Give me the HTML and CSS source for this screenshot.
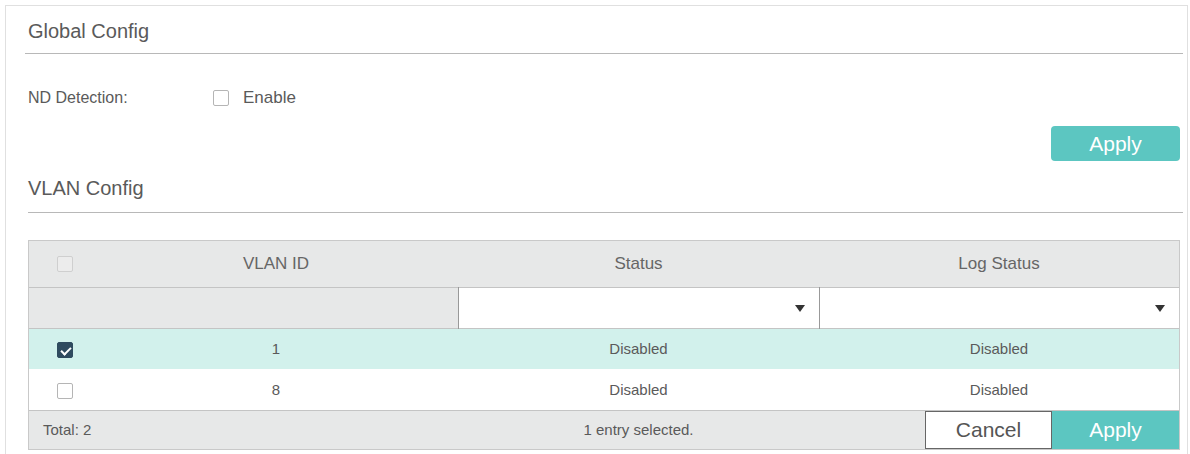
FILE: index.html
```html
<!DOCTYPE html>
<html lang="en">
<head>
  <meta charset="UTF-8">
  <title>ND Detection</title>
  <link rel="stylesheet" href="styles.css">
</head>
<body>
  <div class="panel">
    <h2 class="section-title global">Global Config</h2>

    <div class="form-row">
      <span class="form-label">ND Detection:</span>
      <label class="check-label"><span class="checkbox"></span>Enable</label>
    </div>

    <div class="btn-row">
      <button class="btn-apply">Apply</button>
    </div>

    <h2 class="section-title vlan">VLAN Config</h2>

    <div class="grid-wrap">
      <table class="grid">
        <colgroup>
          <col class="col-check">
          <col class="col-id">
          <col class="col-status">
          <col>
        </colgroup>
        <thead>
          <tr class="head-row">
            <th class="cell-check"><span class="checkbox faded"></span></th>
            <th>VLAN ID</th>
            <th>Status</th>
            <th>Log Status</th>
          </tr>
          <tr class="filter-row">
            <td></td>
            <td></td>
            <td class="select-cell"><div class="select"><span class="arrow"></span></div></td>
            <td class="select-cell"><div class="select"><span class="arrow"></span></div></td>
          </tr>
        </thead>
        <tbody>
          <tr class="selected">
            <td class="cell-check"><span class="checkbox checked"></span></td>
            <td>1</td>
            <td>Disabled</td>
            <td>Disabled</td>
          </tr>
          <tr>
            <td class="cell-check"><span class="checkbox"></span></td>
            <td>8</td>
            <td>Disabled</td>
            <td>Disabled</td>
          </tr>
        </tbody>
      </table>

      <div class="grid-foot">
        <span class="total">Total: 2</span>
        <span class="sel-count">1 entry selected.</span>
        <span class="spacer"></span>
        <button class="btn-cancel">Cancel</button>
        <button class="btn-foot-apply">Apply</button>
      </div>
    </div>
  </div>
</body>
</html>
```

FILE: styles.css
```css
body {
    margin: 0;
    background-color: #fff;
    font-family: "Liberation Sans", Arial, sans-serif;
    color: #5a5a5a;
}

.panel {
    margin: 5px 2px 0 5px;
    height: 449px;
    box-sizing: border-box;
    border: 1px solid #e0e0e0;
    border-bottom: none;
    padding: 0 4px 0 22px;
}

.section-title {
    margin: 0;
    font-weight: normal;
    font-size: 20px;
    line-height: 22px;
    color: #5a5a5a;
    border-bottom: 1px solid #b8b8b8;
}

.section-title.global {
    padding: 14px 0 11px 3px;
    margin-left: -3px;
}

.section-title.vlan {
    padding: 16px 0 13px 0;
}

.form-row {
    display: flex;
    align-items: center;
    height: 22px;
    margin-top: 33px;
    font-size: 16px;
}

.form-label {
    width: 185px;
}

.check-label {
    display: flex;
    align-items: center;
    font-size: 17px;
}

.checkbox {
    display: inline-block;
    width: 16px;
    height: 16px;
    box-sizing: border-box;
    border: 1px solid #b5b5b5;
    border-radius: 2px;
    background-color: #fff;
    margin-right: 14px;
    position: relative;
}

.checkbox.faded {
    border-color: #cfcfcf;
    background-color: #ececec;
}

.checkbox.checked {
    background-color: #2f4b5f;
    border-color: #2f4b5f;
}

.checkbox.checked::after {
    content: "";
    position: absolute;
    left: 5px;
    top: 2px;
    width: 4px;
    height: 8px;
    border: solid #fff;
    border-width: 0 2px 2px 0;
    transform: rotate(45deg);
}

.btn-row {
    display: flex;
    justify-content: flex-end;
    margin-top: 17px;
    padding-right: 3px;
}

.btn-apply {
    width: 129px;
    height: 35px;
    border: none;
    border-radius: 4px;
    background-color: #5cc6c1;
    color: #fff;
    font-family: inherit;
    font-size: 21px;
    padding: 0;
}

.grid-wrap {
    margin: 27px 3px 0 0;
    border: 1px solid #c9c9c9;
}

.grid {
    width: 100%;
    border-collapse: collapse;
    table-layout: fixed;
    font-size: 15px;
}

.col-check { width: 65px; }
.col-id { width: 364px; }
.col-status { width: 361px; }

.grid th,
.grid td {
    padding: 0;
    text-align: center;
    font-weight: normal;
    color: #5a5a5a;
}

.grid th {
    font-size: 17px;
    color: #666;
}

.grid .cell-check {
    text-align: left;
    padding-left: 28px;
}

.cell-check .checkbox {
    vertical-align: middle;
    margin: 0;
}

.head-row {
    height: 46px;
    background-color: #e7e8e8;
    border-bottom: 1px solid #c4c4c4;
}

.filter-row {
    height: 40px;
    background-color: #e7e8e8;
    border-bottom: 1px solid #c4c4c4;
}

.select-cell {
    background-color: #fff;
    border-left: 1px solid #999;
}

.select {
    height: 40px;
    position: relative;
}

.arrow {
    position: absolute;
    right: 14px;
    top: 17px;
    width: 0;
    height: 0;
    border-left: 5px solid transparent;
    border-right: 5px solid transparent;
    border-top: 7px solid #333;
}

.grid tbody tr {
    height: 41px;
}

.grid tbody tr.selected {
    background-color: #d2f1ec;
}

.grid-foot {
    display: flex;
    align-items: stretch;
    height: 38px;
    background-color: #e7e8e8;
    border-top: 1px solid #c4c4c4;
    font-size: 15px;
}

.total {
    width: 415px;
    padding-left: 14px;
    line-height: 38px;
}

.sel-count {
    width: 361px;
    text-align: center;
    line-height: 38px;
}

.spacer {
    flex: 1;
}

.btn-cancel,
.btn-foot-apply {
    width: 127px;
    border: none;
    padding: 0;
    font-family: inherit;
    font-size: 21px;
}

.btn-cancel {
    background-color: #fff;
    color: #555;
    box-shadow: inset 0 0 0 1px #666;
}

.btn-foot-apply {
    background-color: #5cc6c1;
    color: #fff;
}
```
